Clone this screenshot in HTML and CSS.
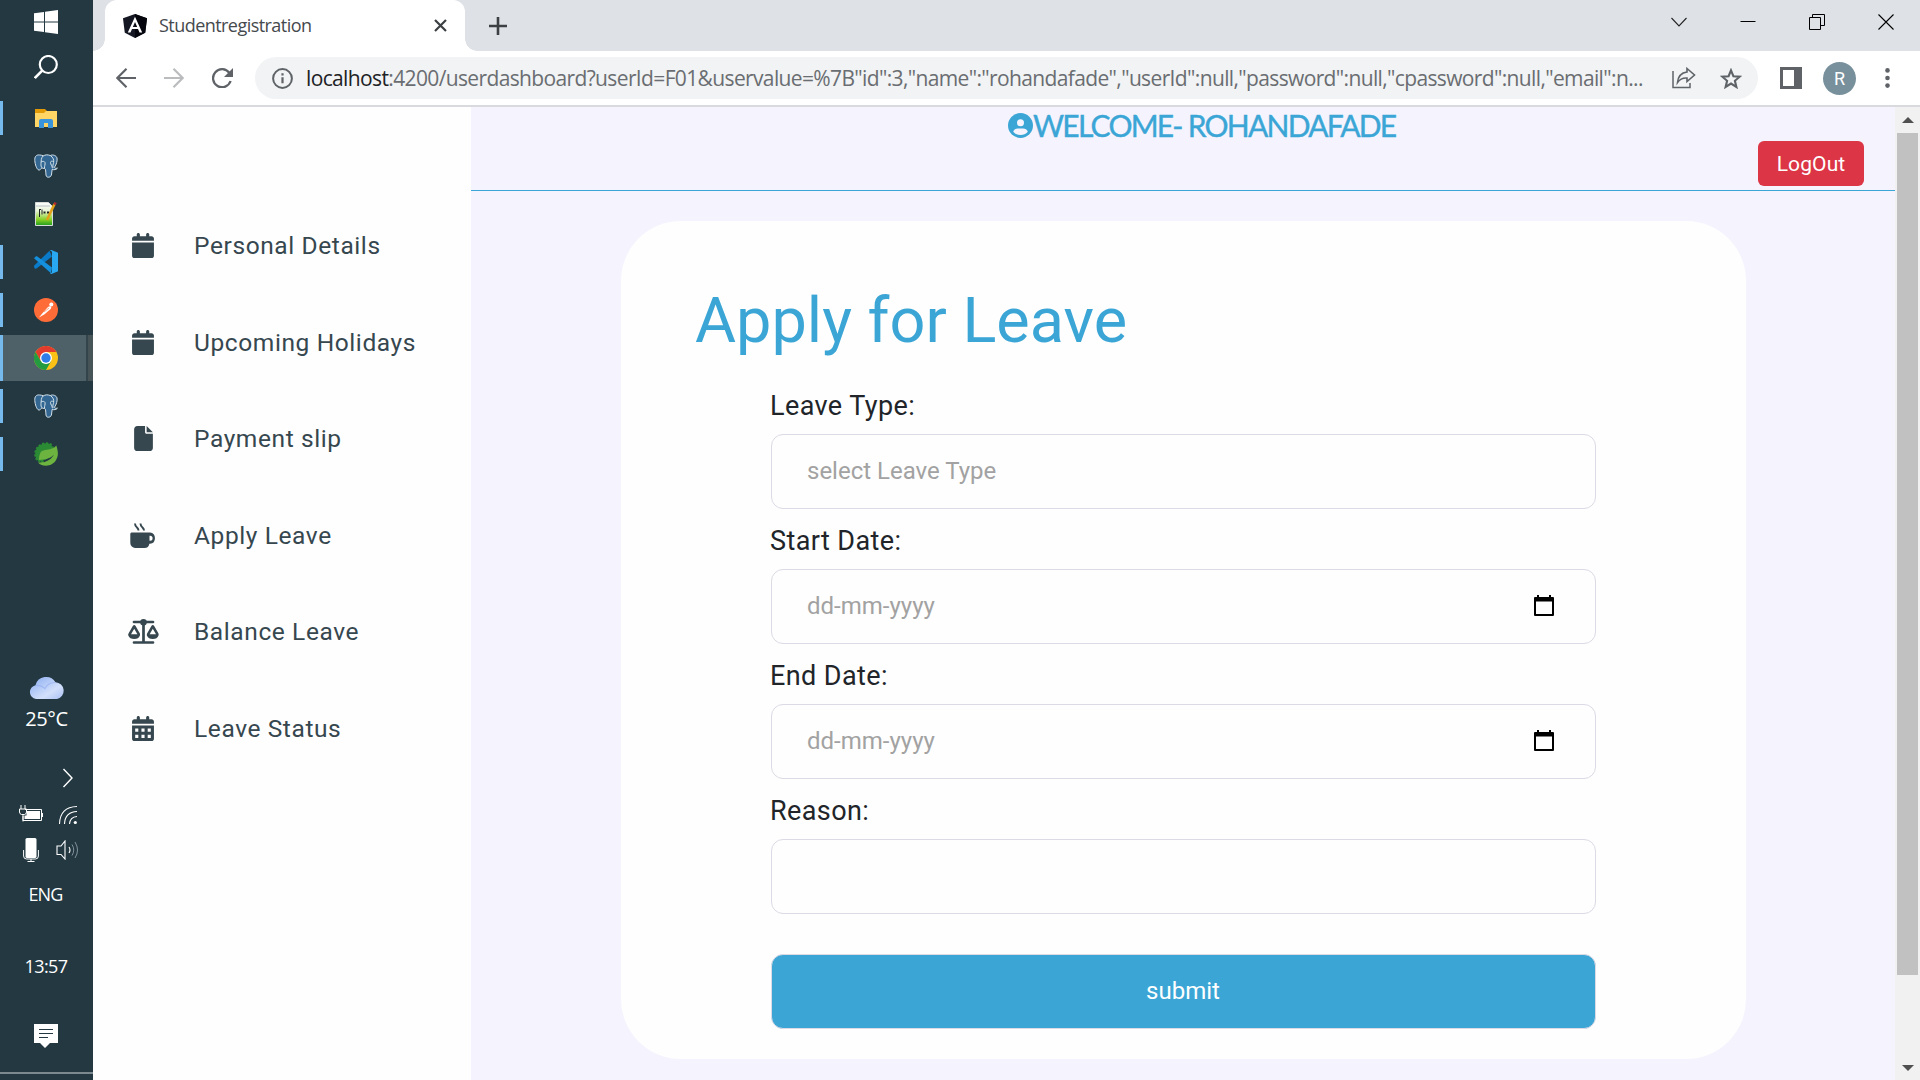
FILE: index.html
```html
<!DOCTYPE html>
<html lang="en">
<head>
<meta charset="utf-8">
<title>Studentregistration</title>
<link rel="stylesheet" href="styles.css">
</head>
<body>
<svg class="defs" width="0" height="0">
  <symbol id="calendar" viewBox="0 0 448 512"><path d="M96 32V64H48C21.500 64 0 85.500 0 112v48H448V112c0-26.500-21.500-48-48-48H352V32c0-17.700-14.300-32-32-32s-32 14.300-32 32V64H160V32c0-17.700-14.300-32-32-32S96 14.300 96 32zM448 192H0V464c0 26.500 21.500 48 48 48H400c26.500 0 48-21.500 48-48V192z"/></symbol>
  <symbol id="elephant" viewBox="0 0 24 24">
    <path d="M5.500 1C2 .5.500 3 .8 6.500c.3 3.800 1.800 9 4 9.500 1.500.3 2.200-1.500 3.200-2.200.8 1 3 .3 3.500 1.500.4 1.700.2 4 .5 5.700.3 1.800 1.300 2.400 2.700 2.200 2-.2 2.600-1.400 2.900-3.200l.5-4.500c1.700.5 4.400.1 5.300-1.300-1.200.2-2.600.1-3-.7 2-3 3.200-7 2.600-9.500C22.300 1.500 19 .3 16.300 1.500 13.500.5 11.300.700 9.300 1.800 8 1.200 6.600 1 5.500 1z" fill="#336791" stroke="#d5e2ec" stroke-width="1"/>
    <path d="M9.300 1.800C6.800 4 7.300 7 7 9.500c-.2 2 .2 3.400 1 4.300M7 8c1.500-1 3.500-.8 4 .5.500 2-.8 3.800-.5 5.800M16.300 1.500c3 2 3.800 4.500 3.300 7-.3 2-1.300 3.200-.4 5M19.500 7.500c-1.400-.6-2.900-.4-3 1 0 2 1.800 3.500 1.900 5.800" fill="none" stroke="#d5e2ec" stroke-width="1"/>
  </symbol>
  <symbol id="datepick" viewBox="0 0 20 21"><path d="M3 0h2v2h10V0h2v2h2q1 0 1 1v17q0 1-1 1H1q-1 0-1-1V3q0-1 1-1h2zM2 6.500V19h16V6.500z" fill="#000" fill-rule="evenodd"/></symbol>
</svg>

<div class="desktop">
  <aside class="taskbar">
    <div class="task start"><svg width="24" height="24" viewBox="0 0 24 24"><path fill="#fff" d="M0 3.300 10 2v9.500H0zM11 1.800 24 0v11.500H11zM0 12.500h10V22L0 20.700zM11 12.500h13V24l-13-1.800z"/></svg></div>
    <div class="task search"><svg width="24" height="24" viewBox="0 0 24 24"><circle cx="14.300" cy="9.500" r="8.500" fill="none" stroke="#fff" stroke-width="2.200"/><path d="M8.200 15.600.8 23" stroke="#fff" stroke-width="2.600"/></svg></div>
    <div class="apps">
      <div class="task open"><svg width="24" height="24" viewBox="0 0 24 24"><path fill="#e29a06" d="M1 3h10l2 2-1 3H1z"/><path fill="#ffd566" d="M1 7h9l2-2h11v16H1z"/><path fill="#3a94dc" d="M5 22v-7q0-2 2-2h10q2 0 2 2v7h-5v-5h-4v5z"/></svg></div>
      <div class="task"><svg width="24" height="24"><use href="#elephant"/></svg></div>
      <div class="task"><svg width="24" height="24" viewBox="0 0 24 24"><defs><linearGradient id="npp" x2="0" y2="1"><stop offset="0" stop-color="#fff"/><stop offset=".35" stop-color="#e9f5d8"/><stop offset=".75" stop-color="#86cf24"/><stop offset="1" stop-color="#1d9a1d"/></linearGradient></defs><path fill="url(#npp)" stroke="#d8dcd8" d="M1.500.5h13l4 4v19h-17z"/><path d="M2 4h14" stroke="#b9c2c8"/><path d="M5.500 8v7M8 7.500v5M5 7.500h2" stroke="#222" fill="none"/><path d="M9.500 10.500h2m1.500 0h2" stroke="#222" stroke-width="2"/><path d="M20.500 2 13 18" stroke="#e3a21a" stroke-width="2.600"/><path d="m21.500.500-1 2.200" stroke="#b0302e" stroke-width="2.600"/></svg></div>
      <div class="task open"><svg width="24" height="24" viewBox="0 0 24 24"><path fill="#0a7bc9" d="M0 15.700 15.500.800 18 6.500 2.500 18.500Q1 19 .3 17.800z"/><path fill="#1590dd" d="M0 8.200 2 6.300l1-.1L18 17.500l-1 5.800z"/><path fill="#2aa9f3" d="M17.500 0 24 2.800v18.400L17.500 24q-1 0-1.800-.8 2.300.5 2.300-1.700v-19Q18 .500 15.700.800 16.500 0 17.500 0z"/></svg></div>
      <div class="task open"><svg width="24" height="24" viewBox="0 0 24 24"><circle cx="12" cy="12" r="12" fill="#ff6c37"/><path fill="#fff" d="m5 19.500 3.200-4 5.300-6q1.800-1.800 3.200-1.200 1.200 1.200 0 2.800l-6.200 5.200z"/><circle cx="17.300" cy="6.600" r="2" fill="#fff"/><path d="m10 14 5-4" stroke="#ff6c37" stroke-width=".6"/></svg></div>
      <div class="task open active"><svg width="24" height="24" viewBox="0 0 24 24"><circle cx="12" cy="12" r="12" fill="#fbc116"/><path fill="#e33b2e" d="M1.600 6A12 12 0 0 1 22.400 6H12L6.800 15z"/><path fill="#249a41" d="M1.600 6A12 12 0 0 0 12 24l5.200-9-5.200 3-5.200-3z"/><circle cx="12" cy="12" r="6" fill="#fff"/><circle cx="12" cy="12" r="4.700" fill="#2f7de9"/></svg></div>
      <div class="task open"><svg width="24" height="24"><use href="#elephant"/></svg></div>
      <div class="task open"><svg width="24" height="24" viewBox="0 0 24 24"><path fill="#2b8a34" stroke="#2b8a34" stroke-width="2" stroke-dasharray="2.200 1.600" d="M3 18A10.800 10.800 0 0 1 17 2.500L20 8 8 20z"/><path fill="#6db33f" d="M7 9.800C11 6.500 18 9 22.300 3.500c1.500 4 2.300 9 .7 12.500-3 8.500-14 10-19 4.500 9 .5 13.500-3.500 16-8-4 4.500-9 5-15 5.500-.3-3 .8-6 2-8.200z"/></svg></div>
    </div>
    <div class="weather">
      <svg width="36" height="23" viewBox="0 0 36 23"><defs><linearGradient id="cl" x2="1" y2="1"><stop offset="0" stop-color="#86aaf0"/><stop offset=".65" stop-color="#d3e0fb"/><stop offset="1" stop-color="#a9c0f3"/></linearGradient></defs><path fill="url(#cl)" d="M7 23a7 7 0 0 1-.5-13.800A11 11 0 0 1 26.500 6.200 8.500 8.500 0 0 1 28 23z"/><path d="M7 9.500q5-.5 9 3 3-6 10-6" fill="none" stroke="#8daaf0" stroke-width="1.200" opacity=".6"/></svg>
      <span>25°C</span>
    </div>
    <div class="tray">
      <svg class="more" width="12" height="20" viewBox="0 0 12 20"><path d="m1.500 1 8.500 9-8.500 9" fill="none" stroke="#fff" stroke-width="1.400"/></svg>
      <div class="trayrow">
        <svg width="24" height="18" viewBox="0 0 24 18"><path d="M6 4.500h16.500v11H4V11" fill="none" stroke="#fff"/><path d="M7.500 6H21v8H5.500v-3.500h2z" fill="#fff"/><path d="M23.500 8v4M2 0v4m4-4v4M.5 4h7v3q0 2-2 2.500h-3Q.500 9 .5 7zM4 10v6.500" stroke="#fff" fill="none"/></svg>
        <svg width="20" height="20" viewBox="0 0 20 20"><path d="M1.500 19Q2 2 19 1.500M6.500 19Q7 7 19 6.500M11.500 19q.500-7 7.500-7.500" fill="none" stroke="#fff" stroke-width="1.100"/><circle cx="17.300" cy="17.500" r="1.600" fill="#fff"/></svg>
      </div>
      <div class="trayrow second">
        <svg width="16" height="24" viewBox="0 0 16 24"><rect x="2.500" width="11" height="20" rx="1.500" fill="#fff"/><path d="M.6 12v6q0 3 3 3h8.800q3 0 3-3v-6M8 21v2.400M4.500 23.500h7" fill="none" stroke="#fff"/></svg>
        <svg width="23" height="20" viewBox="0 0 23 20"><path d="M1 6h4l4-5v18l-4-4.500H1zM13 7q2 3 0 6" fill="none" stroke="#fff" stroke-width="1.100"/><path d="M16 4.500q3.500 5.500 0 11M19 2q5 8 0 16" fill="none" stroke="#82929a"/></svg>
      </div>
      <div class="lang">ENG</div>
      <div class="clock">13:57</div>
      <svg class="note" width="24" height="24" viewBox="0 0 24 24"><path fill="#fff" d="M0 0h24v19h-8l-5 5-5-5H0z"/><path d="M5 5.500h14M5 9.500h14M5 13.500h9" stroke="#233841"/></svg>
    </div>
    <div class="peek"></div>
  </aside>

  <div class="browser">
    <div class="tabstrip">
      <div class="tab">
        <svg class="favicon" width="24" height="24" viewBox="0 0 24 24"><path fill="#151823" d="m12 0 12 4.200-1.800 14.500L12 24 1.800 18.700 0 4.200z"/><path fill="#05060d" d="m12 0 12 4.200-1.800 14.500L12 24z"/><path fill="#fff" fill-rule="evenodd" d="M12 2.800 4.800 18.500h2.700L9 15h6l1.500 3.500h2.700zM12 8l2.200 5H9.800z"/></svg>
        <span class="tabtitle">Studentregistration</span>
        <svg width="13" height="13" viewBox="0 0 13 13"><path d="m1 1 11 11M12 1 1 12" stroke="#3c4043" stroke-width="2.200"/></svg>
      </div>
      <svg class="plus" width="18" height="18" viewBox="0 0 18 18"><path d="M9 0v18M0 9h18" stroke="#3c4043" stroke-width="2.600"/></svg>
      <div class="controls">
        <svg width="16" height="16" viewBox="0 0 16 16"><path d="m.500 4 7.500 8 7.500-8" fill="none" stroke="#222" stroke-width="1.100"/></svg>
        <svg width="16" height="16" viewBox="0 0 16 16"><path d="M.5 7.500h15" stroke="#000"/></svg>
        <svg width="16" height="16" viewBox="0 0 16 16"><path d="M.5 3.500h11v12H.5zM3.500 3.500v-3h12v11h-4" fill="none" stroke="#000"/></svg>
        <svg width="16" height="16" viewBox="0 0 16 16"><path d="m.500.500 15 15M15.500.500l-15 15" stroke="#000" stroke-width="1.100"/></svg>
      </div>
    </div>
    <div class="toolbar">
      <div class="nav">
        <svg width="20" height="20" viewBox="0 0 20 20"><path d="M20 10H1.500M10.500.800 1.300 10l9.200 9.200" fill="none" stroke="#5f6368" stroke-width="2.200"/></svg>
        <svg width="20" height="20" viewBox="0 0 20 20"><path d="M0 10h18.500M9.500.800 18.700 10l-9.200 9.200" fill="none" stroke="#babcbe" stroke-width="2.200"/></svg>
        <svg width="21" height="20" viewBox="0 0 21 20"><path d="M17.300 4.800A9 9 0 1 0 18.600 13" fill="none" stroke="#5f6368" stroke-width="2.300"/><path fill="#5f6368" d="M21 0v9h-9z"/></svg>
      </div>
      <div class="omnibox">
        <svg width="21" height="21" viewBox="0 0 21 21"><circle cx="10.500" cy="10.500" r="9.400" fill="none" stroke="#5f6368" stroke-width="2"/><path d="M10.500 9.200v6M10.500 5.300v2.300" stroke="#5f6368" stroke-width="2.200"/></svg>
        <span class="url"><b>localhost</b>:4200/userdashboard?userId=F01&amp;uservalue=%7B"id":3,"name":"rohandafade","userId":null,"password":null,"cpassword":null,"email":n...</span>
        <svg class="share" width="24" height="22" viewBox="0 0 24 22"><path d="M1 4v16.500h17V16" fill="none" stroke="#5f6368" stroke-width="1.500"/><path d="M15 1.500 22.500 8 15 14.500V11q-6-.5-9.500 4.500Q6.500 6 15 5z" fill="none" stroke="#5f6368" stroke-width="1.600"/></svg>
        <svg class="star" width="22" height="21" viewBox="0 0 22 21"><path d="m11 2.300 2.400 5.900 6.300.5-4.800 4.100 1.500 6.200-5.400-3.400L5.600 19l1.500-6.200-4.800-4.100 6.300-.5z" fill="none" stroke="#5f6368" stroke-width="2.100"/></svg>
      </div>
      <svg class="panel" width="22" height="22" viewBox="0 0 22 22"><path fill="#5f6368" fill-rule="evenodd" d="M0 0h22v22H0zM3 3v16h11V3z"/></svg>
      <div class="avatar">R</div>
      <svg width="5" height="20" viewBox="0 0 5 20"><g fill="#5f6368"><circle cx="2.500" cy="2.400" r="2.300"/><circle cx="2.500" cy="10" r="2.300"/><circle cx="2.500" cy="17.600" r="2.300"/></g></svg>
    </div>

    <div class="viewport">
      <nav class="sidebar">
        <a class="item"><span class="ico"><svg width="22" height="25"><use href="#calendar"/></svg></span>Personal Details</a>
        <a class="item"><span class="ico"><svg width="22" height="25"><use href="#calendar"/></svg></span>Upcoming Holidays</a>
        <a class="item"><span class="ico"><svg width="19" height="25" viewBox="0 0 384 512"><path d="M0 64C0 28.700 28.700 0 64 0H224V128c0 17.700 14.300 32 32 32H384V448c0 35.300-28.700 64-64 64H64c-35.300 0-64-28.700-64-64V64zm384 64H256V0L384 128z"/></svg></span>Payment slip</a>
        <a class="item"><span class="ico"><svg class="mug" width="26" height="25" viewBox="0 0 26 25"><path d="M5 .5q0 2.500 2 4 1.500 1.500 1.500 3M10.500.5q0 2.500 2 4 1.500 1.500 1.500 3" fill="none" stroke="#36474f" stroke-width="1.900"/><path fill-rule="evenodd" d="M1.500 9.500H20a5.700 5.700 0 0 1 0 11.300h-.6A5 5 0 0 1 14.500 25H5.500A5 5 0 0 1 .3 20V11q0-1.500 1.200-1.500zm18 3.200v5h.6a2.500 2.500 0 0 0 0-5z"/></svg></span>Apply Leave</a>
        <a class="item"><span class="ico"><svg width="31" height="25" viewBox="0 0 31 25"><path d="M6 3h19M6 23.500h19M15.500 3v20" fill="none" stroke="#36474f" stroke-width="2.700" stroke-linecap="round"/><circle cx="15.500" cy="3.300" r="3.300"/><path fill-rule="evenodd" d="M6.200 6q.8 0 1.400 1l4.300 7.500q.3 1 0 2-1.200 3.500-5.700 3.500T.300 16.500q-.3-1 .2-2L4.800 7q.6-1 1.400-1zm0 3.700L3 15.300h6.400zM24.800 6q.8 0 1.400 1l4.300 7.500q.3 1 0 2-1.200 3.500-5.700 3.500t-5.900-3.500q-.3-1 .2-2L23.400 7q.6-1 1.400-1zm0 3.700-3.200 5.600H28z"/></svg></span>Balance Leave</a>
        <a class="item"><span class="ico"><svg width="22" height="25" viewBox="0 0 448 512"><path fill-rule="evenodd" d="M96 32V64H48C21.500 64 0 85.500 0 112v48H448V112c0-26.500-21.500-48-48-48H352V32c0-17.700-14.300-32-32-32s-32 14.300-32 32V64H160V32c0-17.700-14.300-32-32-32S96 14.300 96 32zM448 192H0V464c0 26.500 21.500 48 48 48H400c26.500 0 48-21.500 48-48V192zM64 256h64v64H64zM192 256h64v64h-64zM320 256h64v64h-64zM64 384h64v64H64zM192 384h64v64h-64zM320 384h64v64h-64z"/></svg></span>Leave Status</a>
      </nav>
      <main class="main">
        <header class="header">
          <div class="welcome"><svg width="25" height="25" viewBox="0 0 25 25"><circle cx="12.500" cy="12.500" r="12.500" fill="#3ba6d6"/><circle cx="12.500" cy="9.700" r="3.500" fill="#f5f4fe"/><path fill="#f5f4fe" d="M5.200 18.800q1.300-3.300 4.600-3.300h5.400q3.300 0 4.600 3.300a9.700 9.700 0 0 1-14.600 0z"/></svg><span>WELCOME- ROHANDAFADE</span></div>
          <button class="logout">LogOut</button>
        </header>
        <form class="card">
          <h1>Apply for Leave</h1>
          <div class="fields">
            <label>Leave Type:</label>
            <div class="input">select Leave Type</div>
            <label>Start Date:</label>
            <div class="input">dd-mm-yyyy<svg width="20" height="21"><use href="#datepick"/></svg></div>
            <label>End Date:</label>
            <div class="input">dd-mm-yyyy<svg width="20" height="21"><use href="#datepick"/></svg></div>
            <label>Reason:</label>
            <div class="input"></div>
            <button class="submit" type="button">submit</button>
          </div>
        </form>
      </main>
      <div class="scrollbar">
        <svg width="12" height="6" viewBox="0 0 12 6"><path fill="#505050" d="m6 0 6 6H0z"/></svg>
        <div class="thumb"></div>
        <svg class="down" width="12" height="6" viewBox="0 0 12 6"><path fill="#505050" d="M0 0h12L6 6z"/></svg>
      </div>
    </div>
  </div>
</div>
</body>
</html>
```
FILE: styles.css
```css
* { box-sizing: border-box; }
body { margin: 0; width: 1920px; height: 1080px; overflow: hidden; font-family: Roboto, "Liberation Sans", sans-serif; background: #fefefe; }
svg { display: block; flex: none; }
button { font-family: inherit; }
.defs { position: absolute; }
.desktop { display: flex; height: 1080px; }

.taskbar { width: 93px; flex: none; height: 1080px; background: #233841; color: #fff; display: flex; flex-direction: column; font-family: "Open Sans", "Noto Sans", sans-serif; }
.task { height: 46px; display: flex; align-items: center; padding-left: 34px; }
.start { height: 44px; }
.apps { padding-top: 5px; display: flex; flex-direction: column; gap: 2px; }
.open { background: linear-gradient(#76b9ed, #76b9ed) 0 6px / 3px 34px no-repeat; }
.active { background: linear-gradient(90deg, #76b9ed 3px, #4e6068 3px, #4e6068 86px, #34444b 86px, #34444b 88px, #465458 88px); }
.weather { margin-top: 199px; height: 62px; display: flex; flex-direction: column; align-items: center; }
.weather span { font-size: 20px; line-height: 26px; margin-top: 7px; letter-spacing: -0.4px; }
.tray { flex: 1; display: flex; flex-direction: column; }
.more { margin: 30px 0 0 62px; }
.trayrow { display: flex; justify-content: space-between; padding: 0 15px 0 19px; margin-top: 17px; height: 20px; }
.second { margin-top: 13px; height: 24px; align-items: center; padding: 0 14px 0 23px; }
.lang { margin-top: 20px; padding-right: 2px; text-align: center; font-size: 18px; line-height: 24px; letter-spacing: -0.8px; }
.clock { margin-top: 48px; padding-right: 1px; text-align: center; font-size: 18px; line-height: 24px; letter-spacing: -0.6px; }
.note { margin: 46px 0 0 34px; }
.peek { height: 8px; border-top: 2px solid #7c898e; }

.browser { flex: 1; display: flex; flex-direction: column; min-width: 0; }
.tabstrip { height: 51px; background: #dee1e6; display: flex; align-items: center; padding-left: 12px; }
.tab { width: 360px; height: 51px; background: #fff; border-radius: 12px 12px 0 0; display: flex; align-items: center; padding: 0 18px; position: relative; }
.tab::before, .tab::after { content: ""; position: absolute; bottom: 0; width: 12px; height: 12px; }
.tab::before { left: -12px; background: radial-gradient(circle at 0 0, transparent 11.500px, #fff 12px); }
.tab::after { right: -12px; background: radial-gradient(circle at 100% 0, transparent 11.500px, #fff 12px); }
.tabtitle { flex: 1; margin-left: 12px; padding-bottom: 1px; font: 18px/24px "Open Sans", "Noto Sans", sans-serif; letter-spacing: -0.55px; color: #45494d; }
.plus { margin-left: 24px; }
.controls { margin: -8px 26px 0 auto; display: flex; gap: 53px; }
.toolbar { height: 56px; flex: none; background: #fff; border-bottom: 2px solid #d9dadd; display: flex; align-items: center; padding-right: 30px; }
.nav { display: flex; gap: 28px; padding-left: 23px; width: 162px; }
.omnibox { width: 1503px; height: 42px; border-radius: 21px; background: #f1f3f4; display: flex; align-items: center; padding: 0 16px 0 17px; }
.url { margin-left: 13px; font: 21px/28px "Open Sans", "Noto Sans", sans-serif; letter-spacing: -0.635px; color: #6a6d71; white-space: nowrap; width: 1350px; }
.url b { font-weight: 400; color: #202124; }
.share { margin-left: 16px; }
.star { margin-left: 24px; }
.panel { margin-left: 22px; }
.avatar { width: 33px; height: 33px; margin: 0 auto 0 21px; border-radius: 50%; background: #78909c; color: #fff; font-size: 18px; line-height: 33px; text-align: center; }

.viewport { flex: 1; display: flex; min-height: 0; }
.sidebar { width: 378px; background: #fefefe; padding-top: 90.500px; display: flex; flex-direction: column; }
.item { height: 96.500px; display: flex; align-items: center; color: #36474f; fill: #36474f; font-size: 24.500px; letter-spacing: 0.6px; white-space: nowrap; }
.ico { width: 101px; padding-right: 1px; display: flex; justify-content: center; }
.main { width: 1424px; background: #f5f4fe; display: flex; flex-direction: column; }
.header { height: 84px; flex: none; border-bottom: 1px solid #3ba6d6; display: flex; flex-direction: column; }
.welcome { height: 34px; padding: 3px 0 0 537px; display: flex; align-items: center; color: #3ba6d6; font: 30px/30px Lato, sans-serif; letter-spacing: -1.75px; white-space: nowrap; }
.welcome span { margin-top: -1px; -webkit-text-stroke: 0.4px #3ba6d6; }
.logout { align-self: flex-end; margin-right: 31px; width: 106px; height: 45px; border: 0; border-radius: 6px; background: #dc3545; color: #fff; font-size: 21px; letter-spacing: 0.1px; padding: 0; }
.card { margin: 30px 0 0 150px; width: 1125px; height: 838px; flex: none; border-radius: 60px; background: #fefefe; padding: 62px 150px 0; }
h1 { margin: 0 0 0 -76px; height: 75px; font-weight: 400; font-size: 63px; line-height: 75px; color: #3ba6d6; white-space: nowrap; }
.fields { padding-top: 16px; display: flex; flex-direction: column; }
label { height: 60px; padding-top: 14px; margin-left: -1px; font-size: 27px; line-height: 36px; letter-spacing: 0.4px; color: #212529; }
.input { height: 75px; border: 1px solid #dbdae5; border-radius: 12px; display: flex; align-items: center; justify-content: space-between; padding: 0 41px 2px 35px; font-size: 24px; color: #a2a2a2; }
.submit { margin-top: 40px; height: 75px; border: 1px solid #dbdae5; border-radius: 12px; background: #3ba6d6; color: #fff; font-size: 24px; padding: 0 1px 2px 0; }
.scrollbar { width: 25px; background: #f1f1f1; display: flex; flex-direction: column; align-items: center; padding-top: 10px; }
.thumb { width: 21px; height: 842px; margin-top: 10px; background: #c1c1c1; }
.down { margin-top: 90px; }
```
